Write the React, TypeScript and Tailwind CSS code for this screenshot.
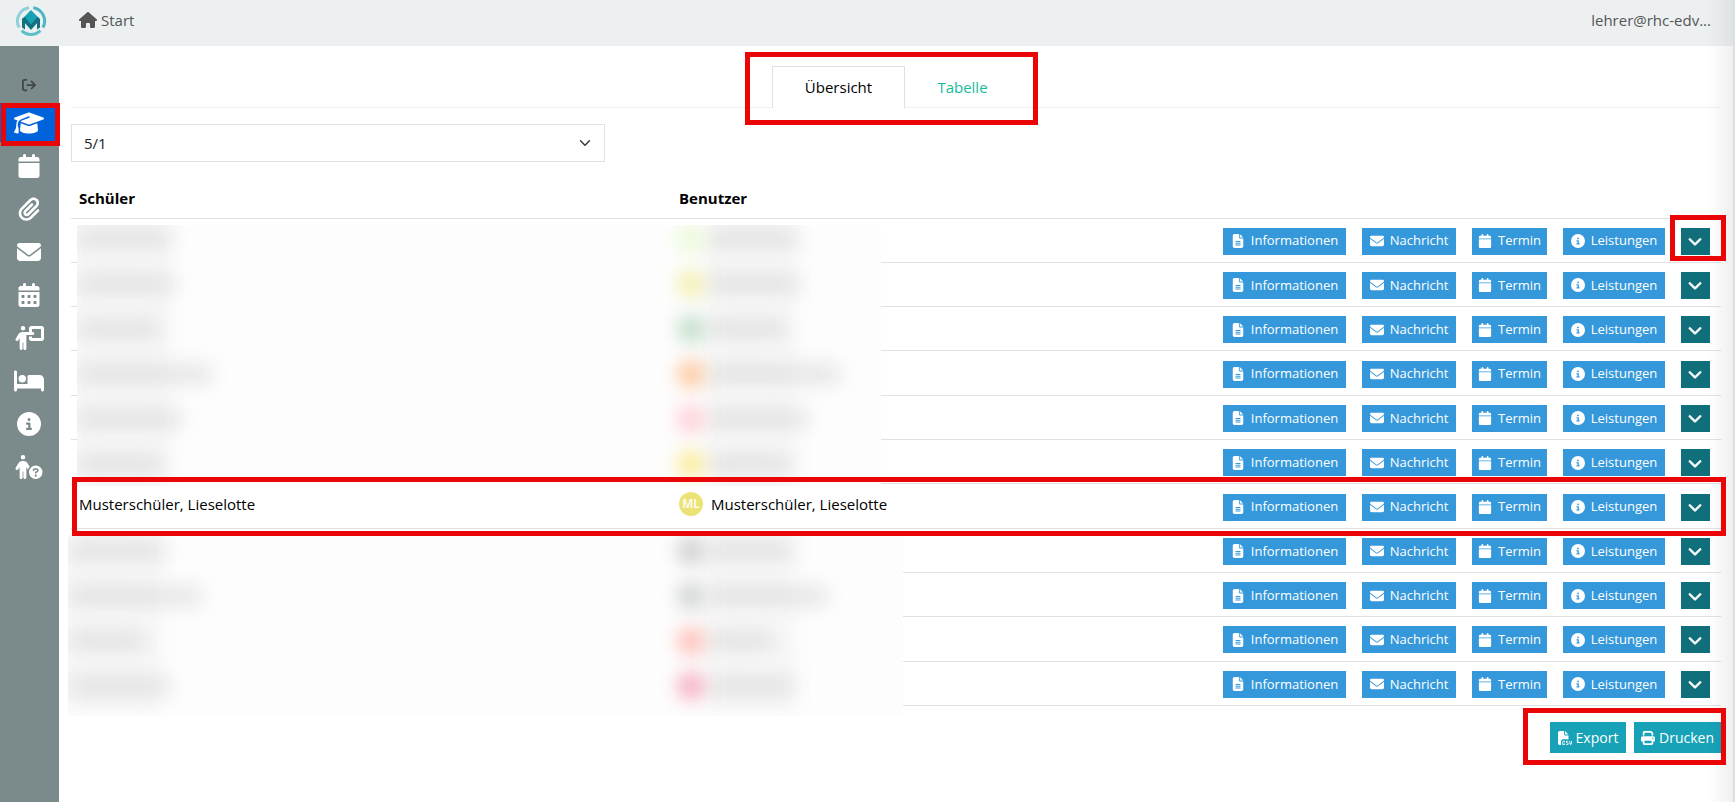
import React from "react";
import {
  FaArrowRightFromBracket,
  FaBed,
  FaCalendar,
  FaCalendarDays,
  FaChevronDown,
  FaCircleInfo,
  FaEnvelope,
  FaFileCsv,
  FaFileLines,
  FaGraduationCap,
  FaHouse,
  FaPaperclip,
  FaPersonChalkboard,
  FaPersonCircleQuestion,
  FaPrint,
} from "react-icons/fa6";
import type { IconType } from "react-icons";

type NavItem = { label: string; icon: IconType; size: string; active?: boolean };

const navItems: NavItem[] = [
  { label: "Klassen", icon: FaGraduationCap, size: "h-6 w-[30px]", active: true },
  { label: "Kalender", icon: FaCalendar, size: "h-6 w-6" },
  { label: "Dateien", icon: FaPaperclip, size: "h-6 w-6" },
  { label: "Nachrichten", icon: FaEnvelope, size: "h-6 w-6" },
  { label: "Termine", icon: FaCalendarDays, size: "h-6 w-6" },
  { label: "Unterricht", icon: FaPersonChalkboard, size: "h-6 w-[30px]" },
  { label: "Internat", icon: FaBed, size: "h-6 w-[30px]" },
  { label: "Info", icon: FaCircleInfo, size: "h-6 w-6" },
  { label: "Hilfe", icon: FaPersonCircleQuestion, size: "h-6 w-[30px]" },
];

const actions: { label: string; icon: IconType }[] = [
  { label: "Informationen", icon: FaFileLines },
  { label: "Nachricht", icon: FaEnvelope },
  { label: "Termin", icon: FaCalendar },
  { label: "Leistungen", icon: FaCircleInfo },
];

type Student = { name: string; initials: string } | null;

const students: Student[] = [
  null,
  null,
  null,
  null,
  null,
  null,
  { name: "Musterschüler, Lieselotte", initials: "ML" },
  null,
  null,
  null,
  null,
];

type Smudge = { name: string; avatar: string; user: string };

const upperSmudges: Smudge[] = [
  { name: "w-[94px]", avatar: "bg-[#e6f9d0]", user: "w-[88px]" },
  { name: "w-[97px]", avatar: "bg-[#f1ec9f]", user: "w-[90px]" },
  { name: "w-[82px]", avatar: "bg-[#b5d6be]", user: "w-[76px]" },
  { name: "w-[134px]", avatar: "bg-[#ffbc8a]", user: "w-[130px]" },
  { name: "w-[104px]", avatar: "bg-[#ffc4cd]", user: "w-[98px]" },
  { name: "w-[86px]", avatar: "bg-[#fbe782]", user: "w-[82px]" },
];

const lowerSmudges: Smudge[] = [
  { name: "w-[97px]", avatar: "bg-[#c4c4c4]", user: "w-[82px]" },
  { name: "w-[133px]", avatar: "bg-[#c8caca]", user: "w-[118px]" },
  { name: "w-[75px]", avatar: "bg-[#ffb0a8]", user: "w-[62px]" },
  { name: "w-[101px]", avatar: "bg-[#f59db3]", user: "w-[84px]" },
];

function Logo() {
  return (
    <svg viewBox="0 0 32 32" className="h-8 w-8" aria-hidden="true">
      <g fill="none" strokeWidth="3">
        <path d="M14 2.7A13.5 13.5 0 0 0 4.1 22.6" stroke="#8fd0d9" />
        <path d="M18.3 2.7A13.5 13.5 0 0 1 27.9 22.6" stroke="#4db5c2" />
        <path d="M6.6 25.7A13.5 13.5 0 0 0 25.4 25.7" stroke="#5dbfcb" />
      </g>
      <path d="M16 5 25.4 14.5 16 25 6.6 14.5Z" fill="#17a2b4" />
      <path d="M7 14 9.6 12 16 19.4 22.4 12 25 14V22.4L22 24.6V17.6L16 24.4 10 17.6V24.6L7 22.4Z" fill="#14707e" />
    </svg>
  );
}

function Frame({ className }: { className: string }) {
  return <div aria-hidden="true" className={`pointer-events-none absolute z-20 border-[5px] border-[#ea0606] ${className}`} />;
}

function Redaction({ rows, className, nameCol }: { rows: Smudge[]; className: string; nameCol: string }) {
  return (
    <div aria-hidden="true" className={`absolute z-10 grid overflow-hidden bg-[#fdfdfd] ${className}`}>
      {rows.map((row, i) => (
        <div key={i} className="flex h-[45px] items-center">
          <div className={`flex h-full shrink-0 items-center ${nameCol}`}>
            <div className="h-full w-[90px] bg-[#f3f4f3] blur-[10px]" />
            <div className={`-ml-[90px] h-4 bg-[#e0e0e0] blur-[10px] ${row.name}`} />
          </div>
          <div className={`z-10 h-7 w-7 shrink-0 rounded-full opacity-80 blur-[9px] ${row.avatar}`} />
          <div className="ml-1 h-full w-[84px] bg-[#f4f5f4] blur-[10px]" />
          <div className={`-ml-[84px] h-4 bg-[#dfdfdf] blur-[10px] ${row.user}`} />
        </div>
      ))}
    </div>
  );
}

export default function App() {
  return (
    <div className="relative flex min-h-screen flex-col overflow-hidden bg-white font-['Open_Sans','Noto_Sans',sans-serif] text-[15px] text-black">
      <header className="flex h-[46px] items-center bg-[#ecf0f1] pr-6 text-[#555]">
        <div className="flex w-[79px] items-center pl-[15px] pb-1">
          <Logo />
        </div>
        <a href="#start" className="flex items-center gap-1 pb-[6px]">
          <FaHouse className="h-4 w-[18px]" />
          Start
        </a>
        <span className="ml-auto pb-[6px]">lehrer@rhc-edv...</span>
      </header>

      <div className="flex flex-1">
        <nav className="w-[59px] shrink-0 bg-[#7b8a8b] pt-[22px] text-white">
          <button type="button" aria-label="Abmelden" className="flex h-[35px] w-full items-center justify-center pr-0.5 pb-0.5 text-[#3f4545]">
            <FaArrowRightFromBracket className="h-[14px] w-[14px]" />
          </button>
          {navItems.map(({ label, icon: Icon, size, active }) => (
            <a
              key={label}
              href="#"
              aria-label={label}
              className={`relative mb-1 flex h-[39px] items-center justify-center pr-0.5 ${active ? "bg-[#0063dc]" : ""}`}
            >
              <Icon className={size} />
              {active && <Frame className="-right-px left-px top-0 h-[43px]" />}
            </a>
          ))}
        </nav>

        <main className="min-w-0 flex-1 pl-3 pr-[14px] pt-5">
          <div className="flex justify-center border-b border-[#ecf0f1]">
            <div role="tablist" className="relative -mb-px flex h-[42px]">
              <button
                type="button"
                role="tab"
                aria-selected="true"
                className="w-[133px] border border-b-0 border-[#dee2e6] bg-white"
              >
                Übersicht
              </button>
              <button type="button" role="tab" aria-selected="false" className="w-[115px] text-[#18bc9c]">
                Tabelle
              </button>
              <Frame className="-left-[27px] -right-[18px] -top-[14px] h-[73px]" />
            </div>
          </div>

          <div className="relative mt-4 w-[534px]">
            <select
              aria-label="Klasse"
              className="h-[38px] w-full appearance-none border border-[#dee2e6] bg-white px-3 text-[15px] text-[#212529]"
            >
              <option>5/1</option>
            </select>
            <svg
              viewBox="0 0 16 16"
              className="pointer-events-none absolute right-[14px] top-[13px] h-3 w-3"
              fill="none"
              stroke="#343a40"
              strokeWidth="2"
              strokeLinecap="round"
              strokeLinejoin="round"
              aria-hidden="true"
            >
              <path d="m2 5 6 6 6-6" />
            </svg>
          </div>

          <div className="relative mt-4">
            <table className="h-[528px] w-full table-fixed border-collapse">
              <colgroup>
                <col className="w-4/11" />
                <col />
                <col className="w-[139px]" />
                <col className="w-[110px]" />
                <col className="w-[91px]" />
                <col className="w-[118px]" />
                <col className="w-[48px]" />
              </colgroup>
              <thead>
                <tr className="h-[40px] border-b border-[#dee2e6] text-left">
                  <th className="px-2 font-bold">Schüler</th>
                  <th className="px-2 font-bold">Benutzer</th>
                  <th colSpan={5} />
                </tr>
              </thead>
              <tbody>
                {students.map((student, i) => (
                  <tr key={i} className="border-b border-[#dee2e6]">
                    <td className="px-2 pb-1">{student?.name}</td>
                    <td className="px-2 pb-1">
                      {student && (
                        <span className="flex items-center gap-2">
                          <span className="flex h-6 w-6 items-center justify-center rounded-full bg-[#ebe375] text-[12px] font-semibold text-white">
                            {student.initials}
                          </span>
                          {student.name}
                        </span>
                      )}
                    </td>
                    {actions.map(({ label, icon: Icon }) => (
                      <td key={label} className="px-2 pt-0.5">
                        <button
                          type="button"
                          className="flex h-[27px] w-full items-center justify-center gap-[6px] bg-[#3498db] text-[13px] text-white"
                        >
                          <Icon className="h-[14px] w-auto" />
                          {label}
                        </button>
                      </td>
                    ))}
                    <td className="px-2 pt-0.5">
                      <button
                        type="button"
                        aria-label="Mehr"
                        className="flex h-[27px] w-[29px] items-center justify-center bg-[#116e7b] pr-px text-white"
                      >
                        <FaChevronDown className="h-[14px] w-[14px] stroke-current stroke-[28]" />
                      </button>
                    </td>
                  </tr>
                ))}
              </tbody>
            </table>

            <Redaction rows={upperSmudges} nameCol="w-[600px]" className="left-[6px] top-[47px] h-[261px] w-[804px] content-end" />
            <Redaction rows={lowerSmudges} nameCol="w-[609px]" className="-left-[3px] top-[358px] h-[180px] w-[835px] content-center pb-4" />

            <Frame className="-right-[5px] top-[37px] h-[46px] w-[56px]" />
            <Frame className="-right-[5px] left-px top-[299px] h-[59px]" />
          </div>

          <div className="relative mt-4 flex justify-end gap-2 text-[14px] text-white">
            <button type="button" className="flex h-[31px] w-[76px] items-center justify-center gap-1 bg-[#17a2b8]">
              <FaFileCsv className="h-[14px] w-auto" />
              Export
            </button>
            <button type="button" className="flex h-[31px] w-[87px] items-center justify-center gap-1 bg-[#17a2b8]">
              <FaPrint className="h-[14px] w-auto" />
              Drucken
            </button>
            <Frame className="-right-[5px] -top-[14px] h-[57px] w-[203px]" />
          </div>
        </main>
      </div>

      <div
        aria-hidden="true"
        className="pointer-events-none absolute inset-y-0 right-0 w-7 border-r-2 border-[#dcdedf] bg-linear-to-r from-transparent to-black/6"
      />
    </div>
  );
}
